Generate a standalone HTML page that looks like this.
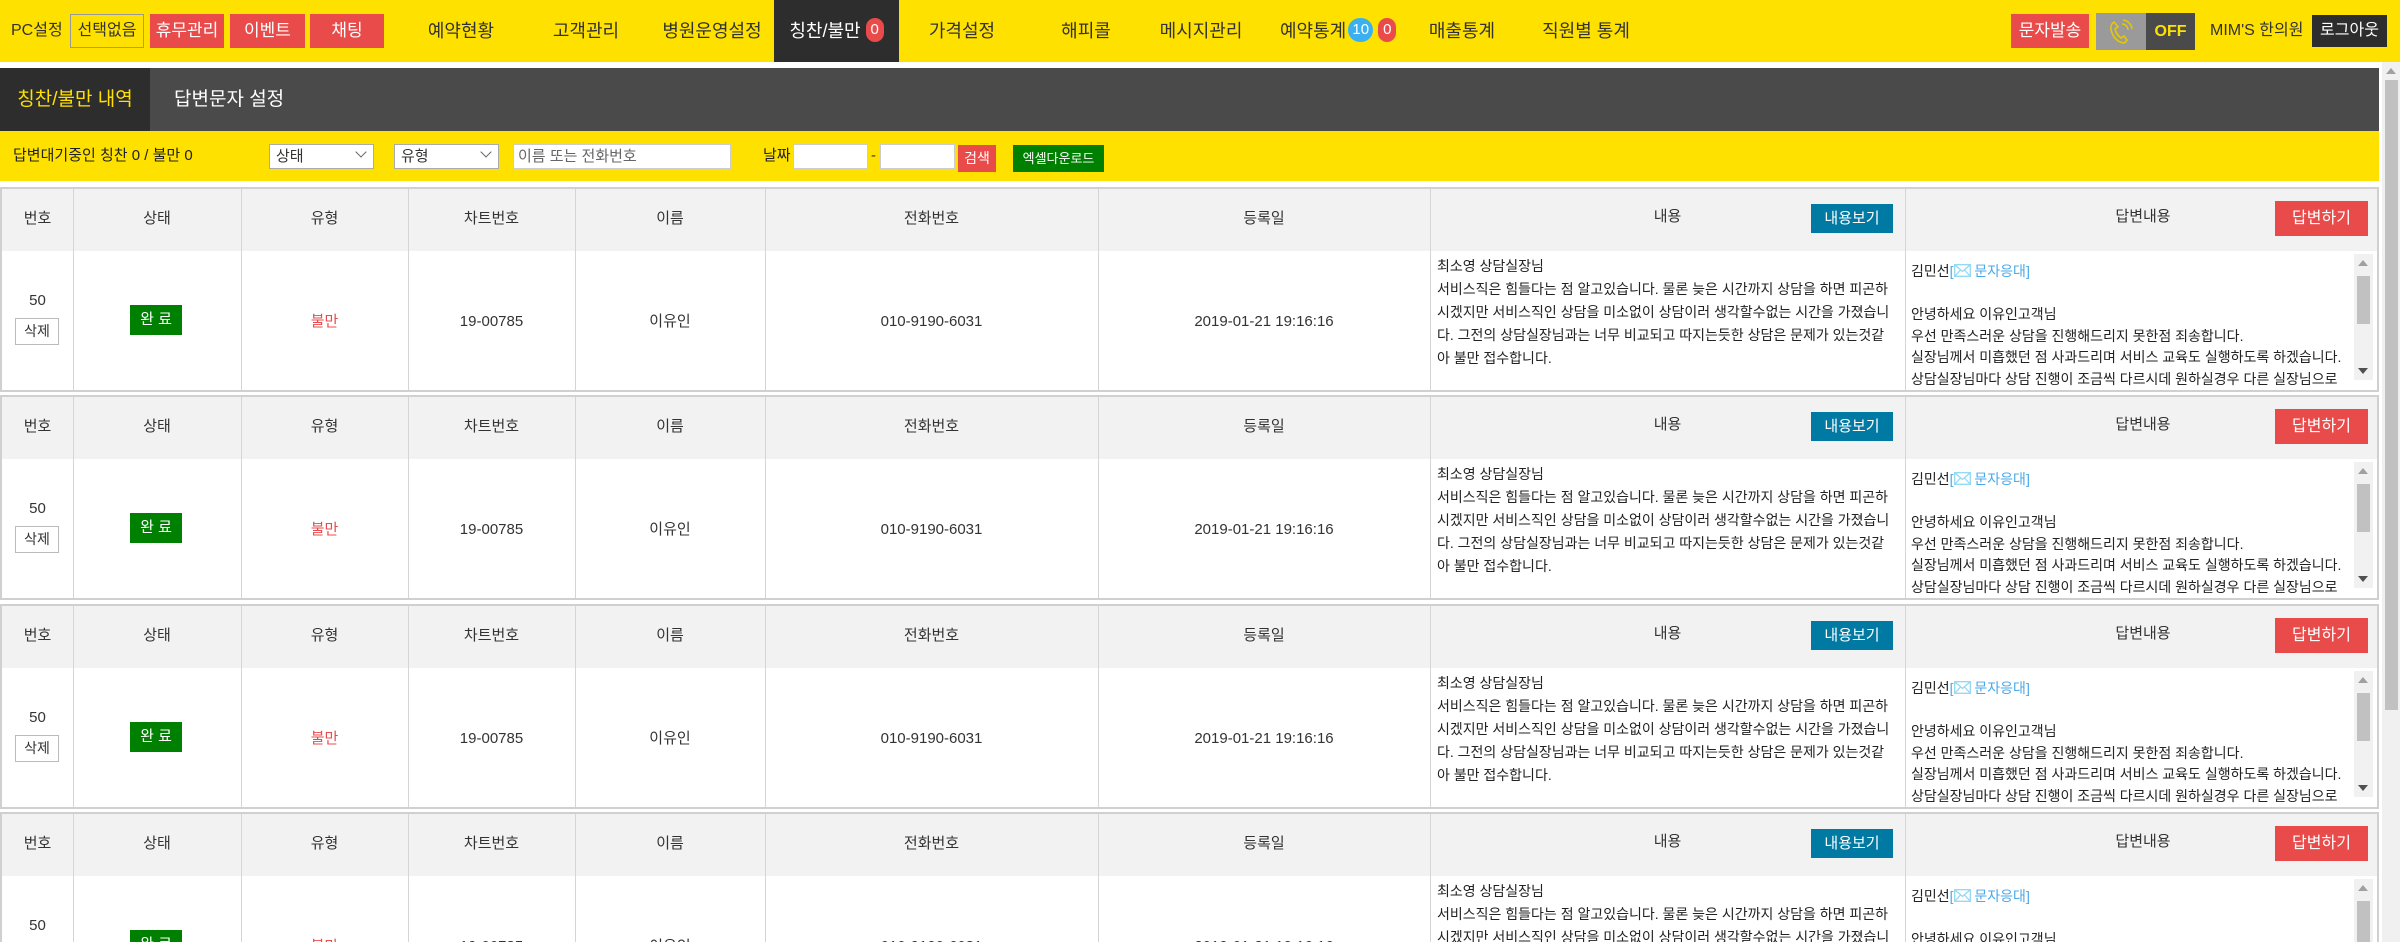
<!DOCTYPE html>
<html style="width:2400px;height:942px;overflow:hidden"><head><meta charset="utf-8">
<style>
*{margin:0;padding:0;box-sizing:border-box}
body{width:2400px;height:942px;overflow:hidden;background:#fff;font-family:"Liberation Sans","Noto Sans CJK KR",sans-serif;color:#333;position:relative}
#wrap{position:absolute;left:0;top:0;width:2400px;height:942px;overflow:hidden}
.a{position:absolute}
.top{left:0;top:0;width:2400px;height:62px;background:#ffe100}
.nav{position:absolute;top:0;height:62px;line-height:62px;font-size:18px;color:#333;white-space:nowrap}
.btn{position:absolute;height:34px;line-height:34px;text-align:center;font-size:17px;color:#fff;background:#e94b4b}
.badge{display:inline-block;height:24px;line-height:24px;border-radius:12px;color:#fff;font-size:15px;text-align:center;vertical-align:middle;position:relative;top:-2px}
.tabs{left:0;top:68px;width:2379px;height:63px;background:#4a4a4a}
.filter{left:0;top:131px;width:2379px;height:50px;background:#ffe100}
.sel{position:absolute;top:144px;height:25px;background:#fff;border:1px solid #aaa;font-size:15px;line-height:23px;padding-left:6px;color:#333}
.sel i{position:absolute;right:8px;top:3px;width:8px;height:8px;border-right:1.5px solid #666;border-bottom:1.5px solid #666;transform:rotate(45deg)}
.inp{position:absolute;top:144px;height:25px;background:#fff;border:1px solid #ccc;font-size:15px;line-height:23px;padding-left:4px;color:#666}
.blk{position:absolute;left:0;width:2379px;height:205px;border:2px solid #d0d0d0;background:#fff;overflow:hidden}
.hd{position:absolute;left:0;top:0;width:100%;height:62px;background:#f2f2f2}
.vl{position:absolute;top:0;bottom:0;width:1px;background:#d5d5d5}
.c{position:absolute;text-align:center;font-size:15px;color:#333;white-space:nowrap}
.ct{position:absolute;left:1435px;top:66px;font-size:14px;line-height:23px;white-space:nowrap;color:#222}
.ans{position:absolute;left:1904px;top:65px;width:467px;height:135px;overflow:hidden;font-size:14px;line-height:21.5px;padding:7px 0 0 5px;white-space:nowrap;color:#222}
.sb{position:absolute;left:2352px;top:65px;width:19px;height:126px;background:#f1f1f1}
</style></head><body>
<div id="wrap">
<div class="a top"></div>
<div class="nav" style="left:11px;font-size:16px">PC설정</div>
<div class="a" style="left:70px;top:14px;width:74px;height:34px;border:1px solid #999;font-size:16px;line-height:32px;text-align:center">선택없음</div>
<div class="btn" style="left:150px;top:14px;width:74px">휴무관리</div>
<div class="btn" style="left:230px;top:14px;width:75px">이벤트</div>
<div class="btn" style="left:310px;top:14px;width:74px">채팅</div>
<div class="nav" style="left:426px;width:70px;text-align:center">예약현황</div>
<div class="nav" style="left:551px;width:70px;text-align:center">고객관리</div>
<div class="nav" style="left:662px;width:100px;text-align:center">병원운영설정</div>
<div class="a" style="left:774px;top:0;width:125px;height:62px;background:#2d2d2d"></div>
<div class="nav" style="left:774px;width:125px;text-align:center;color:#fff">칭찬/불만 <span class="badge" style="background:#e94b4b;width:18px">0</span></div>
<div class="nav" style="left:927px;width:70px;text-align:center">가격설정</div>
<div class="nav" style="left:1056px;width:60px;text-align:center">해피콜</div>
<div class="nav" style="left:1156px;width:90px;text-align:center">메시지관리</div>
<div class="nav" style="left:1280px">예약통계<span class="badge" style="background:#3bb0f0;width:25px;margin-left:2px">10</span> <span class="badge" style="background:#e94b4b;width:18px">0</span></div>
<div class="nav" style="left:1427px;width:70px;text-align:center">매출통계</div>
<div class="nav" style="left:1541px;width:90px;text-align:center">직원별 통계</div>
<div class="btn" style="left:2011px;top:14px;width:78px">문자발송</div>
<div class="a" style="left:2096px;top:13px;width:50px;height:37px;background:#9a9a9a"></div>
<svg class="a" style="left:2108px;top:18px" width="26" height="28" viewBox="0 0 26 28"><path d="M6 4 C3 6 2 10 4 15 C6 20 10 24 15 25 C17 25 18 24 19 22 L16 18 L13 20 C10 18 8 15 7 11 L10 9 Z" fill="none" stroke="#e6c800" stroke-width="1.6"/><path d="M14 6 A6 6 0 0 1 20 12 M15 2 A10 10 0 0 1 24 11" fill="none" stroke="#e6c800" stroke-width="1.4"/></svg>
<div class="a" style="left:2146px;top:13px;width:49px;height:37px;background:#4a4a4a;color:#ffe100;font-size:16px;line-height:37px;text-align:center;font-weight:bold">OFF</div>
<div class="nav" style="left:2210px;font-size:16px">MIM'S 한의원</div>
<div class="a" style="left:2312px;top:15px;width:75px;height:32px;background:#2d2d2d;color:#fff;font-size:16px;line-height:32px;text-align:center">로그아웃</div>

<div class="a tabs"></div>
<div class="a" style="left:0;top:68px;width:150px;height:63px;background:#2d2d2d;color:#ffe100;font-size:19px;line-height:63px;text-align:center">칭찬/불만 내역</div>
<div class="a" style="left:174px;top:68px;height:63px;color:#fff;font-size:19px;line-height:63px">답변문자 설정</div>

<div class="a filter"></div>
<div class="a" style="left:13px;top:131px;line-height:50px;font-size:15px;color:#222">답변대기중인 칭찬 0 / 불만 0</div>
<div class="sel" style="left:269px;width:105px">상태<i></i></div>
<div class="sel" style="left:394px;width:105px">유형<i></i></div>
<div class="inp" style="left:513px;width:218px">이름 또는 전화번호</div>
<div class="a" style="left:763px;top:131px;line-height:50px;font-size:15px;color:#222">날짜</div>
<div class="inp" style="left:793px;width:75px"></div>
<div class="a" style="left:871px;top:131px;line-height:50px;font-size:15px">-</div>
<div class="inp" style="left:880px;width:75px"></div>
<div class="a" style="left:958px;top:145px;width:38px;height:27px;background:#e94b4b;color:#fff;font-size:14px;line-height:27px;text-align:center">검색</div>
<div class="a" style="left:1013px;top:145px;width:91px;height:27px;background:#008000;color:#fff;font-size:13px;line-height:27px;text-align:center">엑셀다운로드</div>

<div class="a" style="left:2382px;top:62px;width:18px;height:880px;background:#f0f0f0"></div>
<div class="a" style="left:2385px;top:80px;width:13px;height:630px;background:#c1c1c1"></div>
<div class="a" style="left:2386px;top:68px;width:0;height:0;border-left:5px solid transparent;border-right:5px solid transparent;border-bottom:6px solid #a0a0a0"></div>

<div id="rows"></div>
</div>
<script>
var tops=[187,395,604,812],h='';
tops.forEach(function(T){
var ht=Math.min(205,942-T);
h+='<div class="blk" style="top:'+T+'px;height:'+ht+'px;'+(ht<205?'border-bottom:none;':'')+'"><div class="hd"></div>';
[71,239,406,573,763,1096,1428,1903].forEach(function(x){h+='<div class="vl" style="left:'+x+'px"></div>';});
var cols=[[0,71,'번호'],[71,239,'상태'],[239,406,'유형'],[406,573,'차트번호'],[573,763,'이름'],[763,1096,'전화번호'],[1096,1428,'등록일']];
cols.forEach(function(c){h+='<div class="c" style="left:'+c[0]+'px;width:'+(c[1]-c[0])+'px;top:19px;line-height:22px">'+c[2]+'</div>';});
h+='<div class="c" style="left:1428px;width:475px;top:17px;line-height:22px">내용</div>';
h+='<div class="c" style="left:1903px;width:476px;top:17px;line-height:22px">답변내용</div>';
h+='<div class="a" style="left:1809px;top:15px;width:82px;height:29px;background:#007aa3;color:#fff;font-size:15px;line-height:29px;text-align:center">내용보기</div>';
h+='<div class="a" style="left:2273px;top:12px;width:93px;height:35px;background:#e94b4b;color:#fff;font-size:16px;line-height:35px;text-align:center">답변하기</div>';
h+='<div class="c" style="left:0;width:71px;top:101px;line-height:22px">50</div>';
h+='<div class="a" style="left:13px;top:129px;width:44px;height:27px;border:1px solid #bbb;background:#fff;font-size:14px;line-height:25px;text-align:center">삭제</div>';
h+='<div class="a" style="left:128px;top:116px;width:52px;height:30px;background:#008000;color:#fff;font-size:15px;line-height:30px;text-align:center">완 료</div>';
h+='<div class="c" style="left:239px;width:167px;top:122px;line-height:22px;color:#e94b4b">불만</div>';
h+='<div class="c" style="left:406px;width:167px;top:122px;line-height:22px">19-00785</div>';
h+='<div class="c" style="left:573px;width:190px;top:122px;line-height:22px">이유인</div>';
h+='<div class="c" style="left:763px;width:333px;top:122px;line-height:22px">010-9190-6031</div>';
h+='<div class="c" style="left:1096px;width:332px;top:122px;line-height:22px">2019-01-21 19:16:16</div>';
h+='<div class="ct">최소영 상담실장님<br>서비스직은 힘들다는 점 알고있습니다. 물론 늦은 시간까지 상담을 하면 피곤하<br>시겠지만 서비스직인 상담을 미소없이 상담이러 생각할수없는 시간을 가졌습니<br>다. 그전의 상담실장님과는 너무 비교되고 따지는듯한 상담은 문제가 있는것같<br>아 불만 접수합니다.</div>';
h+='<div class="ans">김민선<span style="color:#4aa8e8">[<svg width="17" height="13" viewBox="0 0 17 13" style="vertical-align:-1px"><rect x="0.7" y="0.7" width="15.6" height="11.6" fill="none" stroke="#8fd8f5" stroke-width="1.3"/><path d="M1 1 L8.5 7.5 L16 1 M1 12 L6.5 6 M16 12 L10.5 6" fill="none" stroke="#8fd8f5" stroke-width="1.2"/></svg> 문자응대]</span><br><br>안녕하세요 이유인고객님<br>우선 만족스러운 상담을 진행해드리지 못한점 죄송합니다.<br>실장님께서 미흡했던 점 사과드리며 서비스 교육도 실행하도록 하겠습니다.<br>상담실장님마다 상담 진행이 조금씩 다르시데 원하실경우 다른 실장님으로</div>';
h+='<div class="sb"><div class="a" style="left:4px;top:6px;border-left:5px solid transparent;border-right:5px solid transparent;border-bottom:6px solid #a0a0a0"></div><div class="a" style="left:3px;top:22px;width:13px;height:48px;background:#c1c1c1"></div><div class="a" style="left:4px;top:114px;border-left:5px solid transparent;border-right:5px solid transparent;border-top:6px solid #505050"></div></div>';
h+='</div>';
});
document.getElementById('rows').innerHTML=h;
</script>
</body></html>
